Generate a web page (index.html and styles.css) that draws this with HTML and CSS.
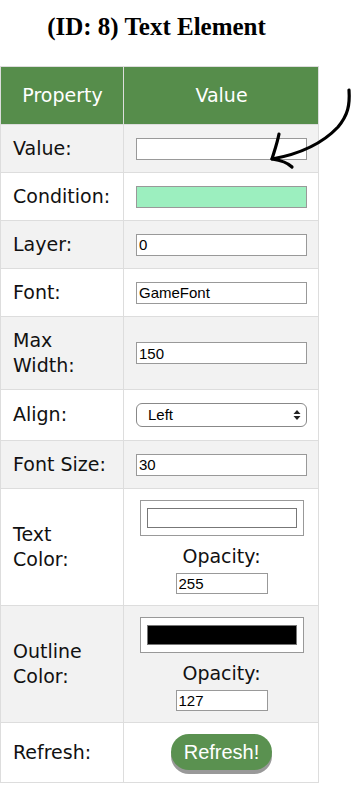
FILE: index.html
```html
<!DOCTYPE html>
<html>
<head>
  <title>Text Element</title>
  <link rel="stylesheet" href="styles.css">
</head>
<body>
  <div class="page">
    <h1>(ID: 8) Text Element</h1>

    <table id="props-table">
      <thead>
        <tr>
          <th class="col-prop">Property</th>
          <th>Value</th>
        </tr>
      </thead>
      <tbody>
        <tr>
          <td>Value:</td>
          <td><input type="text" class="field" value=""></td>
        </tr>
        <tr>
          <td>Condition:</td>
          <td><input type="text" class="field field-cond" value=""></td>
        </tr>
        <tr>
          <td>Layer:</td>
          <td><input type="text" class="field" value="0"></td>
        </tr>
        <tr>
          <td>Font:</td>
          <td><input type="text" class="field" value="GameFont"></td>
        </tr>
        <tr>
          <td>Max Width:</td>
          <td><input type="text" class="field" value="150"></td>
        </tr>
        <tr>
          <td class="tall">Align:</td>
          <td class="tall">
            <div class="select-wrap">
              <select class="field-select">
                <option>Left</option>
                <option>Center</option>
                <option>Right</option>
              </select>
              <svg class="select-arrows" width="8" height="12" viewBox="0 0 8 12">
                <path d="M4 1 L7.5 5 L0.5 5 Z M4 11 L7.5 7 L0.5 7 Z" fill="#222"/>
              </svg>
            </div>
          </td>
        </tr>
        <tr>
          <td>Font Size:</td>
          <td><input type="text" class="field" value="30"></td>
        </tr>
        <tr>
          <td>Text Color:</td>
          <td class="color-cell">
            <input type="color" class="color-pick" value="#ffffff">
            <div class="opacity-label">Opacity:</div>
            <input type="text" class="field opacity" value="255">
          </td>
        </tr>
        <tr>
          <td>Outline Color:</td>
          <td class="color-cell">
            <input type="color" class="color-pick" value="#000000">
            <div class="opacity-label">Opacity:</div>
            <input type="text" class="field opacity" value="127">
          </td>
        </tr>
        <tr>
          <td>Refresh:</td>
          <td class="btn-cell"><button class="refresh-btn">Refresh!</button></td>
        </tr>
      </tbody>
    </table>

    <!-- hint arrow pointing at the value field -->
    <svg class="hint-arrow" width="363" height="170" viewBox="0 0 363 170">
      <path d="M349 80 C350 95 348 105 338 117 C322 134 300 144 272 149" fill="none" stroke="#000" stroke-width="3.2" stroke-linecap="round"/>
      <path d="M279 124 C277 134 274 142 272 149 C279 150 287 152 292 157" fill="none" stroke="#000" stroke-width="3.2" stroke-linecap="round" stroke-linejoin="round"/>
    </svg>
  </div>
</body>
</html>
```
FILE: styles.css
```css
body {
  font-family: "DejaVu Sans", Verdana, sans-serif;
  margin: 0;
  padding: 0;
  background-color: white;
}

.page {
  position: relative;
  width: 319px;
}

h1 {
  font-family: "Liberation Serif", "Times New Roman", serif;
  font-size: 25px;
  font-weight: bold;
  text-align: center;
  line-height: 34px;
  margin: 10px 6px 22px 0;
}

#props-table {
  width: 319px;
  border-collapse: collapse;
  table-layout: fixed;
  font-size: 19px;
  line-height: 25px;
  color: #111;
}

#props-table th,
#props-table td {
  border: 1px solid #ddd;
  padding: 11px 11px 11px 12px;
  text-align: left;
  vertical-align: middle;
}

#props-table th {
  background-color: #568d4b;
  color: white;
  font-weight: normal;
  text-align: center;
  padding-top: 16px;
  padding-bottom: 16px;
}

#props-table .col-prop {
  width: 99px;
}

#props-table td.tall {
  padding-top: 12px;
  padding-bottom: 13px;
}

#props-table tbody tr:nth-child(odd) {
  background-color: #f2f2f2;
}

.field {
  display: block;
  box-sizing: border-box;
  width: 100%;
  height: 22px;
  margin: 0;
  padding: 0 2px;
  border: 1px solid #999;
  background-color: white;
  font-family: "Liberation Sans", Arial, sans-serif;
  font-size: 15px;
  color: #000;
}

.field-cond {
  background-color: #9cefbf;
}

.select-wrap {
  position: relative;
}

.field-select {
  display: block;
  box-sizing: border-box;
  width: 100%;
  height: 24px;
  margin: 0;
  padding: 0 0 0 11px;
  border: 1px solid #888;
  border-radius: 6px;
  background-color: white;
  font-family: "Liberation Sans", Arial, sans-serif;
  font-size: 15px;
  color: #000;
  appearance: none;
  -webkit-appearance: none;
}

.select-arrows {
  position: absolute;
  right: 6px;
  top: 6px;
}

.color-cell {
  text-align: center !important;
}

.color-pick {
  display: block;
  box-sizing: border-box;
  width: 164px;
  height: 36px;
  margin: 0 auto;
  padding: 7px 6px;
  border: 1px solid #999;
  background-color: white;
  -webkit-appearance: none;
  appearance: none;
}

.color-pick::-webkit-color-swatch-wrapper {
  padding: 0;
}

.color-pick::-webkit-color-swatch {
  border: 1px solid #777;
}

.opacity-label {
  margin: 8px 0 4px 0;
  line-height: 25px;
}

.opacity {
  width: 92px;
  height: 21px;
  margin: 0 auto;
}

.btn-cell {
  text-align: center !important;
}

.refresh-btn {
  display: block;
  background-color: #5a9150;
  color: white;
  border: none;
  border-radius: 18px;
  height: 36px;
  padding: 0 13px;
  margin: 0 auto 1px auto;
  font-family: "Liberation Sans", Arial, sans-serif;
  font-size: 20px;
  box-shadow: 0 4px 0 #999;
  cursor: pointer;
}

.refresh-btn:hover {
  opacity: 0.8;
}

.hint-arrow {
  position: absolute;
  left: 0;
  top: 0;
  pointer-events: none;
}
```
